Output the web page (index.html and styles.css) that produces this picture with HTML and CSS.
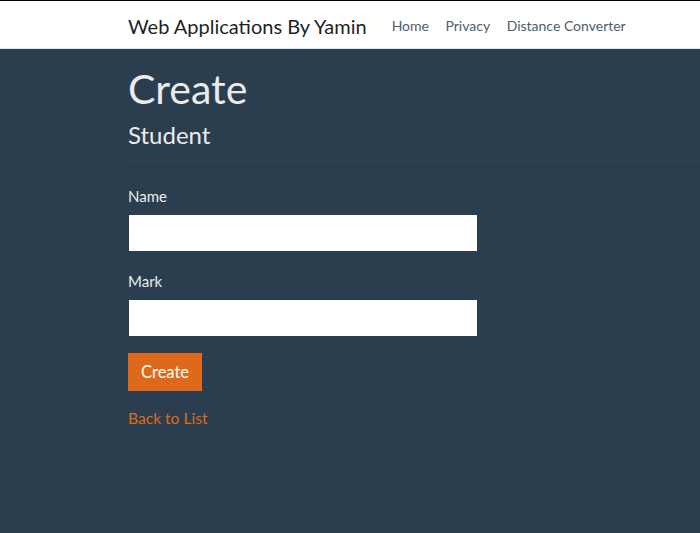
FILE: index.html
```html
<!DOCTYPE html>
<html lang="en">
<head>
<meta charset="utf-8">
<title>Create - Web Applications By Yamin</title>
<link rel="stylesheet" href="styles.css">
</head>
<body>
<header class="navbar">
  <div class="nav-inner">
    <a class="brand" href="#">Web Applications By Yamin</a>
    <nav class="nav-links">
      <a class="nav-link" href="#">Home</a>
      <a class="nav-link" href="#">Privacy</a>
      <a class="nav-link" href="#">Distance Converter</a>
    </nav>
  </div>
</header>
<main class="content">
  <h1 class="title">Create</h1>
  <h3 class="subtitle">Student</h3>
  <hr class="rule">
  <form class="form">
    <div class="field">
      <label class="label" for="name">Name</label>
      <input class="input" id="name" type="text">
    </div>
    <div class="field">
      <label class="label" for="mark">Mark</label>
      <input class="input" id="mark" type="text">
    </div>
    <button class="btn" type="button">Create</button>
  </form>
  <a class="back" href="#">Back to List</a>
</main>
</body>
</html>
```
FILE: styles.css
```css
html, body {
  margin: 0;
  padding: 0;
}
body {
  background: #2b3e50;
  font-family: Lato, "Open Sans", sans-serif;
  font-size: 15px;
  line-height: 1.5;
  color: #ebebeb;
  min-height: 533px;
  overflow: hidden;
}
.navbar {
  background: #fff;
  border-top: 1px solid #000;
  border-bottom: 1px solid #e5e5e5;
  height: 47px;
}
.nav-inner {
  box-sizing: border-box;
  display: flex;
  align-items: center;
  height: 100%;
  padding: 2px 0 0 128px;
}
.brand {
  font-size: 20px;
  color: #1f1f1f;
  text-decoration: none;
  margin-right: 25px;
}
.nav-links {
  display: flex;
  gap: 16.5px;
}
.nav-link {
  font-size: 14px;
  color: #4e5d6c;
  text-decoration: none;
}
.content {
  padding-left: 128px;
}
.title {
  margin: 17px 0 0;
  font-size: 41px;
  font-weight: 400;
  line-height: 1.1;
  color: #ebebeb;
}
.subtitle {
  margin: 11px 0 0;
  font-size: 24px;
  font-weight: 400;
  line-height: 1.1;
  color: #ebebeb;
}
.rule {
  margin: 18px 0 0;
  border: 0;
  border-top: 1px solid rgba(0, 0, 0, 0.1);
}
.form {
  display: flex;
  flex-direction: column;
  align-items: flex-start;
  margin-top: 15px;
}
.field {
  display: flex;
  flex-direction: column;
  align-items: flex-start;
  margin-bottom: 17px;
}
.field + .field .label {
  padding-top: 2px;
  margin-bottom: 8px;
}
.label {
  display: block;
  padding: 3px 0 0 0;
  margin-bottom: 7px;
  color: #ebebeb;
}
.input {
  box-sizing: border-box;
  width: 348px;
  height: 36px;
  margin-left: 1px;
  border: 0;
  border-radius: 0;
  background: #fff;
  padding: 6px 12px;
  font: inherit;
  color: #2b3e50;
}
.btn {
  height: 38px;
  padding: 0 13px;
  border: 0;
  border-radius: 0;
  background: #df691a;
  color: #fff;
  font-family: Lato, sans-serif;
  font-size: 16.5px;
  cursor: pointer;
}
.back {
  display: inline-block;
  margin-top: 16px;
  font-size: 15.6px;
  color: #df691a;
  text-decoration: none;
}
```
